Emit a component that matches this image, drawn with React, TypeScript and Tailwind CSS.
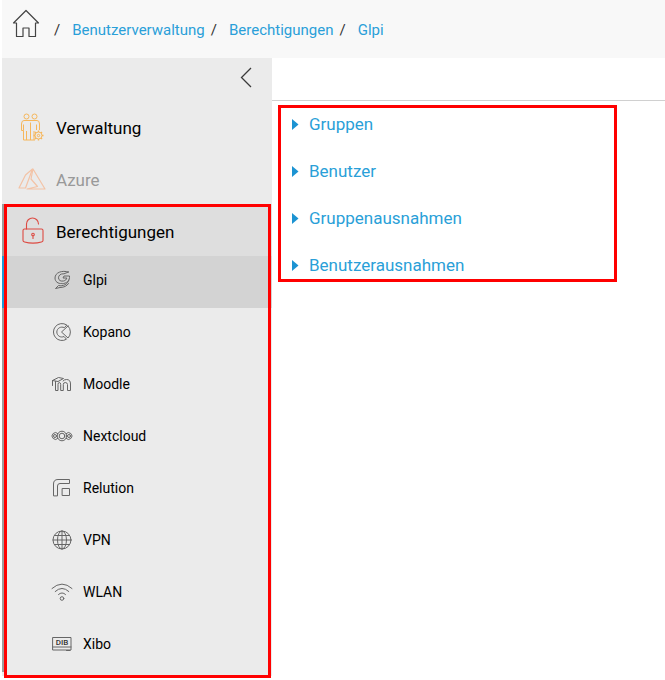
import type { ReactNode } from 'react';

type NavItem = {
  label: string;
  icon: ReactNode;
  active?: boolean;
};

function HomeIcon() {
  return (
    <svg width="28" height="29" viewBox="0 0 28 29" fill="none" stroke="#444" strokeWidth="1.2" strokeLinejoin="round" aria-hidden="true">
      <path d="M1.5 14 14 1.5 26.500 14H23.500V27.500H17V19H11V27.500H4.500V14Z" />
    </svg>
  );
}

function UsersIcon() {
  return (
    <svg width="24" height="29" viewBox="0 0 24 29" fill="none" stroke="#f6b75c" strokeWidth="1" strokeLinejoin="round" aria-hidden="true">
      <circle cx="6.500" cy="3.500" r="2.500" />
      <circle cx="14.500" cy="3.500" r="2.500" />
      <path d="M3.500 27V17.500H1.500V11Q1.500 7.500 4 7.500H17Q19.500 7.500 19.500 11V17" />
      <path d="M3.500 17.500V11.500M10.500 9.500V27M6.500 27V18M14 27V18M16.500 11.500V17M3.500 27H15" />
      <path d="M18.500 17.500V19M18.500 26V27.500M13.500 22.500H15M22 22.500H23.500M15 19 16 20M21 25 22 26M22 19 21 20M16 25 15 26" strokeWidth="1.400" />
      <circle cx="18.500" cy="22.500" r="3.500" />
      <circle cx="18.500" cy="22.500" r="1.200" />
    </svg>
  );
}

function AzureIcon() {
  return (
    <svg width="28" height="23" viewBox="0 0 28 23" fill="none" stroke="#f3c3a6" strokeWidth="1.2" strokeLinejoin="round" aria-hidden="true">
      <path d="M14.500 1 7.500 7 1 20H7.500Z" />
      <path d="M15 1 27 21H9L19.500 18.500 13 11Z" />
    </svg>
  );
}

function LockIcon() {
  return (
    <svg width="22" height="28" viewBox="0 0 22 28" fill="none" stroke="#dd4b43" strokeWidth="1.1" strokeLinecap="round" strokeLinejoin="round" aria-hidden="true">
      <path d="M4.500 12V7A6 6 0 0 1 16.500 7" />
      <path d="M2.500 12H19.500Q21 12 21 13.500V23.500Q21 24.700 19.500 25Q11 27.300 2.500 25Q1 24.700 1 23.500V13.500Q1 12 2.500 12Z" />
      <circle cx="11" cy="17.500" r="1.300" />
      <path d="M11 19V21.500" />
    </svg>
  );
}

function ChevronIcon() {
  return (
    <svg width="12" height="21" viewBox="0 0 12 21" fill="none" stroke="#3a3a3a" strokeWidth="1.300" aria-hidden="true">
      <path d="M11 1 1.500 10.500 11 20" />
    </svg>
  );
}

function SmallIcon({ children }: { children: ReactNode }) {
  return (
    <svg width="22" height="22" viewBox="0 0 22 22" fill="none" stroke="#666" strokeWidth="1" strokeLinecap="round" strokeLinejoin="round" aria-hidden="true">
      {children}
    </svg>
  );
}

const glpiIcon = (
  <SmallIcon>
    <path d="M17.500 3C11 1 4 3.500 4 9C4 12.500 7 15 10.500 14.500" />
    <path d="M17.500 3 13 4.800C9.500 4.500 7.500 6.500 7.500 8.800C7.500 11.500 10 12.500 12.500 12C14.500 11.500 15.500 10.500 15.800 9H12L13 7H18.500C19 11.500 15.500 14.500 11.500 14.700" />
    <path d="M18 11C16.500 15.500 12 17.500 7.500 16.500L4.500 19.500L9 18.500C13 18.500 16 17 17.500 14.500" />
  </SmallIcon>
);

const kopanoIcon = (
  <SmallIcon>
    <path d="M15.500 3.800A8.500 8.500 0 1 0 15.500 18.200L13 15.500A5 5 0 1 1 13 6.500Z" />
    <path d="M17 5 10.500 11 17 17A8.500 8.500 0 0 0 17 5Z" />
  </SmallIcon>
);

const moodleIcon = (
  <SmallIcon>
    <path d="M1.500 7.500 7.500 4.500 12.500 5.500 7 8.500 1.500 7.500V12.500" />
    <path d="M4.500 8.500V17.500H7V11.500Q7 9.500 8.300 9.500T9.700 11.500V17.500H12.300V11.500Q12.300 9.500 14.300 9.500T16.500 11.500V17.500H19.500V11Q19.500 6.500 15.500 6.500Q13 6.500 12 8" />
  </SmallIcon>
);

const nextcloudIcon = (
  <SmallIcon>
    <circle cx="11" cy="11" r="4.800" />
    <circle cx="11" cy="11" r="2.800" />
    <path d="M7 8.700A3.400 3.400 0 1 0 7 13.300" />
    <path d="M15 8.700A3.400 3.400 0 1 1 15 13.300" />
    <circle cx="4" cy="11" r="1.500" />
    <circle cx="18" cy="11" r="1.500" />
  </SmallIcon>
);

const relutionIcon = (
  <SmallIcon>
    <path d="M2.500 18.500V7Q2.500 2.500 7 2.500H18.500V6.500H9Q6.500 6.500 6.500 9V18.500Z" />
    <path d="M11.500 11.500H18.500V18.500H11.500Z" />
  </SmallIcon>
);

const vpnIcon = (
  <SmallIcon>
    <circle cx="11" cy="11" r="9" />
    <ellipse cx="11" cy="11" rx="4.500" ry="9" />
    <path d="M11 2V20M2 11H20M3.500 6.500H18.500M3.500 15.500H18.500" />
  </SmallIcon>
);

const wlanIcon = (
  <SmallIcon>
    <path d="M1 7.500Q11-1.500 21 7.500M4.200 10.500Q11 4.200 17.800 10.500M7.500 13.500Q11 10.200 14.500 13.500" />
    <circle cx="11" cy="17.500" r="1.800" />
  </SmallIcon>
);

const xiboIcon = (
  <SmallIcon>
    <path d="M2 4.500H20V17H2ZM2 14H20M15.500 17.500H19" />
    <text x="11" y="12" textAnchor="middle" fontSize="8" fontWeight="500" fill="#333" stroke="none">DIB</text>
  </SmallIcon>
);

const permissions: NavItem[] = [
  { label: 'Glpi', icon: glpiIcon, active: true },
  { label: 'Kopano', icon: kopanoIcon },
  { label: 'Moodle', icon: moodleIcon },
  { label: 'Nextcloud', icon: nextcloudIcon },
  { label: 'Relution', icon: relutionIcon },
  { label: 'VPN', icon: vpnIcon },
  { label: 'WLAN', icon: wlanIcon },
  { label: 'Xibo', icon: xiboIcon },
];

const crumbs = ['Benutzerverwaltung', 'Berechtigungen', 'Glpi'];

const sections = ['Gruppen', 'Benutzer', 'Gruppenausnahmen', 'Benutzerausnahmen'];

function SubItem({ item }: { item: NavItem }) {
  return (
    <li>
      <a
        href="#"
        aria-current={item.active ? 'page' : undefined}
        className={`flex h-13 items-center gap-2.5 border-l-2 pb-1 pl-[47px] text-sm text-black ${
          item.active ? 'border-[#1c9ad6] bg-[#d3d3d3]' : 'border-[#9c9c9c]'
        }`}
      >
        {item.icon}
        {item.label}
      </a>
    </li>
  );
}

export default function App() {
  return (
    <div className="min-h-screen bg-white pl-0.5 font-['Roboto',sans-serif] text-black">
      <header className="flex h-[58px] items-center bg-[#f8f8f8] pl-2.5">
        <a href="#" aria-label="Startseite" className="pb-3">
          <HomeIcon />
        </a>
        <nav aria-label="Brotkrumen" className="pt-0.5 pl-3.5">
          <ol className="flex items-center text-[15px]">
            {crumbs.map((crumb) => (
              <li key={crumb} className="flex items-center">
                <span className="text-[#333]">/</span>
                <a href="#" className="mr-1.5 ml-3 text-[#2a9fd8]">{crumb}</a>
              </li>
            ))}
          </ol>
        </nav>
      </header>

      <div className="flex items-start">
        <aside className="w-[270px] shrink-0 bg-[#ebebeb] pb-1">
          <div className="flex h-[46px] justify-end pt-[9px] pr-5">
            <button type="button" aria-label="Menü einklappen" className="h-[21px]">
              <ChevronIcon />
            </button>
          </div>
          <nav aria-label="Hauptmenü">
            <div className="flex flex-col gap-1">
              <a href="#" className="flex h-12 items-center pt-0.5 pl-[18px] text-[17px]">
                <span className="w-9 pb-1"><UsersIcon /></span>
                Verwaltung
              </a>
              <a href="#" className="flex h-12 items-center pt-0.5 pl-4 text-[17px] text-[#999]">
                <span className="w-[38px] pb-1"><AzureIcon /></span>
                Azure
              </a>
            </div>
            <div className="relative">
              <a href="#" className="flex h-13 items-center border-l-2 border-[#9c9c9c] bg-[#dedede] pt-1.5 pl-[18px] text-[17px]">
                <span className="w-[34px] pb-1"><LockIcon /></span>
                Berechtigungen
              </a>
              <ul>
                {permissions.map((item) => (
                  <SubItem key={item.label} item={item} />
                ))}
              </ul>
              <div className="pointer-events-none absolute -bottom-1.5 top-0 right-px left-0.5 border-3 border-[#ff0000]" />
            </div>
          </nav>
        </aside>

        <main className="min-w-0 flex-1">
          <div className="h-[43px] border-b border-[#d0d0d0]" />
          <ul className="mt-1 mr-12 ml-1.5 flex flex-col gap-[23px] border-3 border-[#ff0000] pt-[5px] pb-px pl-[11px]">
            {sections.map((section) => (
              <li key={section} className="h-6">
                <button type="button" aria-expanded="false" className="flex h-6 items-center gap-2.5 text-[17px] text-[#2a9fd8]">
                  <svg width="7" height="12" viewBox="0 0 7 12" fill="#1c93d2" aria-hidden="true">
                    <path d="M0 0 6.500 5.500 0 11Z" />
                  </svg>
                  {section}
                </button>
              </li>
            ))}
          </ul>
        </main>
      </div>
    </div>
  );
}
